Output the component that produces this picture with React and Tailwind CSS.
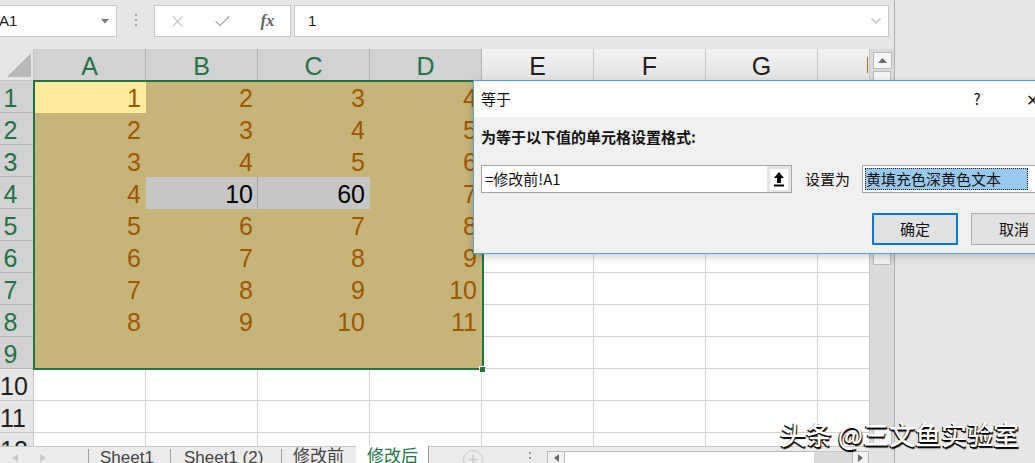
import React from 'react';
import { X, Check, ChevronDown } from 'lucide-react';

const COLS = ['A', 'B', 'C', 'D', 'E', 'F', 'G', 'H'];
const DATA = [
  [1, 2, 3, 4],
  [2, 3, 4, 5],
  [3, 4, 5, 6],
  [4, 10, 60, 7],
  [5, 6, 7, 8],
  [6, 7, 8, 9],
  [7, 8, 9, 10],
  [8, 9, 10, 11],
  [null, null, null, null],
];

const cellTone = (r, c) => {
  if (r < 9 && c < 4) {
    if (r === 0 && c === 0) return 'bg-[#ffeb9c] border-[#ffeb9c] text-[#9c5700]';
    if (r === 3 && c === 1) return 'bg-[#c6c6c6] border-b-[#c6c6c6] border-r-[#a3a3a3] text-black';
    if (r === 3 && c === 2) return 'bg-[#c6c6c6] border-[#c6c6c6] text-black';
    return 'bg-[#c5b57b] border-[#c5b57b] text-[#9c5700]';
  }
  return 'bg-white border-[#d4d4d4]';
};

const GRID = 'grid grid-cols-[34px_repeat(7,112px)_51px] shrink-0';

const FormulaBar = () => (
  <div className="h-[49px] shrink-0 flex items-start pt-[5px] bg-[#e6e6e6]">
    <div className="w-[117px] h-[32px] bg-white border border-l-0 border-[#c6c6c6] flex items-center justify-between pr-[7px]">
      <span className="text-[15px] -ml-[1px] text-[#222]">A1</span>
      <svg width="8" height="5" viewBox="0 0 8 5">
        <polygon points="0,0 8,0 4,4.5" fill="#7a7a7a" />
      </svg>
    </div>
    <div className="w-[37px] flex flex-col items-center gap-[3px] pt-[9px]">
      <span className="w-[2px] h-[2px] bg-[#a8a8a8]" />
      <span className="w-[2px] h-[2px] bg-[#a8a8a8]" />
      <span className="w-[2px] h-[2px] bg-[#a8a8a8]" />
    </div>
    <div className="w-[137px] h-[32px] bg-white border border-[#c6c6c6] flex items-center">
      <div className="w-[45px] flex justify-center text-[#b0b0b0]">
        <X size={19} strokeWidth={1.3} />
      </div>
      <div className="w-[45px] flex justify-center text-[#b0b0b0]">
        <Check size={19} strokeWidth={2} />
      </div>
      <div className="w-[45px] flex justify-center font-['Liberation_Serif',serif] italic font-bold text-[17px] text-[#666]">
        fx
      </div>
    </div>
    <div className="ml-[3px] w-[595px] h-[32px] bg-white border border-[#c6c6c6] flex items-center justify-between pl-[13px] pr-[4px]">
      <span className="text-[15px] text-[#222]">1</span>
      <ChevronDown size={16} strokeWidth={2.5} className="text-[#c4c4c4]" />
    </div>
  </div>
);

const HeaderRow = () => (
  <div className={`${GRID} h-[32px]`}>
    <div className="bg-[#e6e6e6] border-r border-b border-[#c6c6c6]">
      <svg width="33" height="31" viewBox="0 0 33 31">
        <polygon points="31,4 31,28 7,28" fill="#b9b9b9" />
      </svg>
    </div>
    {COLS.map((col, c) =>
      c < 4 ? (
        <div key={col} className="bg-[#d2d2d2] border-r border-b border-[#b4b4b4] text-[#217346] text-[25px] leading-none flex items-center justify-center pt-[4px]">
          {col}
        </div>
      ) : c < 7 ? (
        <div key={col} className="bg-linear-to-b from-[#f3f3f3] to-[#e3e3e3] border-r border-b border-[#c6c6c6] text-[#1e1e1e] text-[25px] leading-none flex items-center justify-center pt-[4px]">
          {col}
        </div>
      ) : (
        <div key={col} className="bg-linear-to-b from-[#f3f3f3] to-[#e3e3e3] border-b border-[#c6c6c6] flex items-center justify-end pr-[1px]">
          <span className="w-px h-[16px] bg-[#b8641a]" />
        </div>
      )
    )}
  </div>
);

const Row = ({ r }) => {
  const sel = r < 9;
  const vals = DATA[r] || [];
  return (
    <div className={`${GRID} h-[32px]`}>
      <div
        className={`border-r border-b flex items-center pt-[4px] text-[25px] leading-none ${
          sel ? 'bg-[#d2d2d2] border-[#b4b4b4] text-[#217346]' : 'bg-[#e6e6e6] border-[#c6c6c6] text-[#1e1e1e]'
        }`}
      >
        <span className="w-[21px] text-center">{r + 1}</span>
      </div>
      {COLS.map((col, c) => (
        <div
          key={col}
          className={`border-b ${c < 7 ? 'border-r' : ''} flex items-center justify-end pr-[4px] pt-[4px] text-[25px] leading-none ${cellTone(r, c)}`}
        >
          {c < 4 && vals[c] != null ? vals[c] : ''}
        </div>
      ))}
    </div>
  );
};

const VScroll = () => (
  <div className="w-[25px] bg-[#dadada] border-l border-[#c6c6c6] flex flex-col pl-[3px]">
    <div className="mt-[3px] w-[19px] h-[17px] shrink-0 bg-[#f5f5f5] border border-[#b9b9b9] flex items-center justify-center">
      <svg width="9" height="5" viewBox="0 0 9 5">
        <polygon points="0,5 9,5 4.5,0" fill="#6a6a6a" />
      </svg>
    </div>
    <div className="mt-[2px] w-[18px] h-[194px] shrink-0 bg-[#f3f3f3] border border-[#b9b9b9]" />
    <div className="mt-auto mb-[1px] w-[19px] h-[17px] shrink-0 bg-[#f5f5f5] border border-[#b9b9b9] flex items-center justify-center">
      <svg width="9" height="5" viewBox="0 0 9 5">
        <polygon points="0,0 9,0 4.5,5" fill="#6a6a6a" />
      </svg>
    </div>
  </div>
);

const Sep = () => <div className="w-px h-[14px] self-end bg-[#9d9d9d]" />;

const TabBar = () => (
  <div className="h-[17px] shrink-0 flex text-[17px] leading-[17px]">
    <div className="w-[356px] flex border-t border-[#c6c6c6] bg-[#ececec] text-[#444]">
      <div className="w-[88px] flex items-end pb-[1px]">
        <svg className="ml-[12px]" width="6" height="8" viewBox="0 0 6 8">
          <polygon points="6,0 6,8 0,4" fill="#c9c9c9" />
        </svg>
        <svg className="ml-[22px]" width="6" height="8" viewBox="0 0 6 8">
          <polygon points="0,0 0,8 6,4" fill="#c9c9c9" />
        </svg>
      </div>
      <Sep />
      <div className="w-[81px] pl-[11px] pt-[2px]">Sheet1</div>
      <Sep />
      <div className="w-[110px] pl-[13px] pt-[2px]">Sheet1 (2)</div>
      <Sep />
      <div className="w-[74px] pl-[11px] pt-[1px]">修改前</div>
    </div>
    <div className="w-[73px] bg-white border-r border-[#9d9d9d] pl-[11px] pt-[2px] text-[#217346]">修改后</div>
    <div className="w-[440px] flex items-start border-t border-[#c6c6c6] bg-[#ececec]">
      <div className="ml-[34px] mt-[3px] w-[20px] h-[20px] shrink-0 rounded-full border border-[#c9c9c9] flex items-center justify-center text-[#c9c9c9] text-[18px] leading-none">
        +
      </div>
      <div className="ml-[46px] mt-[5px] flex flex-col gap-[3px]">
        <span className="w-[2px] h-[2px] bg-[#9a9a9a]" />
        <span className="w-[2px] h-[2px] bg-[#9a9a9a]" />
      </div>
      <div className="ml-[16px] mt-[4px] flex h-[14px]">
        <div className="w-[18px] bg-[#f3f3f3] border border-[#b9b9b9] flex items-center justify-center">
          <svg width="5" height="8" viewBox="0 0 5 8">
            <polygon points="5,0 5,8 0,4" fill="#6a6a6a" />
          </svg>
        </div>
        <div className="w-[249px] bg-white border-y border-[#b9b9b9]" />
        <div className="w-[38px] bg-[#dadada] border-y border-[#c6c6c6]" />
        <div className="w-[17px] bg-[#f3f3f3] border border-[#b9b9b9] flex items-center justify-center">
          <svg width="5" height="8" viewBox="0 0 5 8">
            <polygon points="0,0 0,8 5,4" fill="#6a6a6a" />
          </svg>
        </div>
      </div>
    </div>
    <div className="w-[25px] bg-[#e2e2e2]" />
  </div>
);

const UploadIcon = () => (
  <svg width="10" height="15" viewBox="0 0 10 15">
    <path d="M5 0 L10 6 L7 6 L7 11 L3 11 L3 6 L0 6 Z" fill="#000" />
    <rect x="0" y="12.5" width="10" height="2" fill="#000" />
  </svg>
);

const Dialog = () => (
  <div className="absolute left-[473px] top-[80px] w-[600px] h-[174px] border border-[#4aa3df] bg-[#f0f0f0] shadow-[0_3px_8px_rgba(0,0,0,0.18)] flex flex-col text-[15px] text-[#111] font-['Noto_Sans_CJK_SC','Liberation_Sans',sans-serif]">
    <div className="h-[36px] shrink-0 bg-white flex items-center">
      <div className="w-[496px] pl-[7px]">等于</div>
      <div className="w-[14px] text-center">?</div>
      <div className="ml-[42px] text-[16px]">✕</div>
    </div>
    <div className="flex flex-col pl-[7px]">
      <div className="mt-[10px] h-[20px] leading-[20px] font-bold">为等于以下值的单元格设置格式:</div>
      <div className="mt-[18px] h-[28px] flex items-center">
        <div className="w-[311px] h-full flex border border-[#a5a5a5] bg-white">
          <div className="flex-1 flex items-center pl-[3px]">=修改前!A1</div>
          <div className="w-[24px] bg-[#e4e4e4] flex items-center justify-center">
            <div className="w-[18px] h-[21px] bg-white flex items-center justify-center">
              <UploadIcon />
            </div>
          </div>
        </div>
        <div className="ml-[13px] w-[57px]">设置为</div>
        <div className="w-[200px] h-full border border-[#a5a5a5] bg-white p-[2px]">
          <div className="w-[163px] h-full bg-[#99c9ef] outline-1 outline-dotted outline-[#222] -outline-offset-1 flex items-center pl-[1px]">
            黄填充色深黄色文本
          </div>
        </div>
      </div>
      <div className="mt-[20px] flex">
        <div className="ml-[391px] w-[86px] h-[32px] bg-[#e1e1e1] border-2 border-[#0078d7] flex items-center justify-center">确定</div>
        <div className="ml-[13px] w-[86px] h-[32px] bg-[#e1e1e1] border border-[#adadad] flex items-center justify-center">取消</div>
      </div>
    </div>
  </div>
);

export default function App() {
  return (
    <div className="relative w-[1035px] h-[463px] overflow-hidden bg-[#e6e6e6] text-[#222] font-['Liberation_Sans','Noto_Sans_CJK_SC',sans-serif]">
      <div className="flex h-full">
        <div className="w-[895px] flex flex-col border-r border-[#ababab]">
          <FormulaBar />
          <div className="flex h-[397px] shrink-0">
            <div className="w-[869px] flex flex-col overflow-hidden">
              <HeaderRow />
              {Array.from({ length: 12 }, (_, r) => (
                <Row key={r} r={r} />
              ))}
            </div>
            <VScroll />
          </div>
          <TabBar />
        </div>
        <div className="flex-1 bg-[#e6e6e6]" />
      </div>

      {/* selection frame */}
      <div className="absolute left-[33px] top-[80px] w-[451px] h-[290px] border-2 border-[#217346]" />
      <div className="absolute left-[479px] top-[366px] w-[7px] h-[7px] bg-[#217346] border border-white" />

      <Dialog />

      <div className="absolute left-[780px] top-[421px] text-[26px] leading-none font-medium text-white font-['Noto_Sans_CJK_SC',sans-serif] [text-shadow:-1px_1px_0_#000,1px_2px_1px_#000]">
        头条 @三文鱼实验室
      </div>
    </div>
  );
}
